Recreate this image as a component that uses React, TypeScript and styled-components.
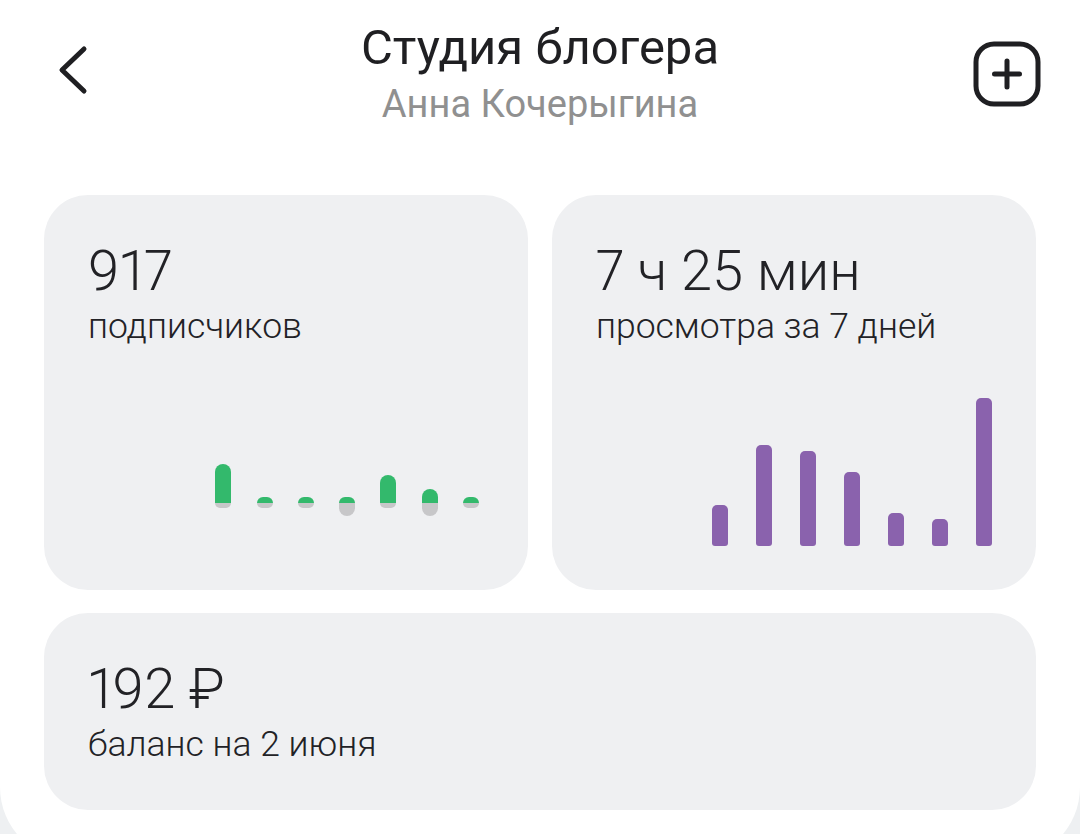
import React from "react";
import styled, { createGlobalStyle } from "styled-components";

const GlobalStyle = createGlobalStyle`
  html, body {
    margin: 0;
    padding: 0;
    background: #eef0f2;
    overflow: hidden;
  }
  body {
    font-family: Roboto, "Noto Sans", "Liberation Sans", sans-serif;
    color: #222226;
  }
  * { box-sizing: border-box; }
`;

const Sheet = styled.div`
  width: 1080px;
  min-height: 861px;
  background: #ffffff;
  border-radius: 0 0 74px 74px;
  padding-bottom: 51px;
`;

const Header = styled.header`
  display: grid;
  grid-template-columns: 1fr auto 1fr;
  align-items: start;
  padding: 20px 38px 0 38px;
`;

const IconButton = styled.button<{ $top: number; $side: "start" | "end"; $inset?: number }>`
  display: flex;
  border: none;
  background: none;
  padding: 0;
  margin-top: ${(p) => p.$top}px;
  margin-left: ${(p) => (p.$side === "start" ? p.$inset ?? 0 : 0)}px;
  justify-self: ${(p) => p.$side};
  color: #1f1f22;
  cursor: pointer;
`;

const TitleBlock = styled.div`
  display: flex;
  flex-direction: column;
  align-items: center;
`;

const Title = styled.h1`
  margin: 0;
  font-size: 49px;
  line-height: 56px;
  font-weight: 400;
  color: #1f1f22;
`;

const Subtitle = styled.div`
  margin-top: 6px;
  font-size: 38px;
  line-height: 44px;
  color: #909090;
`;

const Grid = styled.main`
  display: grid;
  grid-template-columns: 1fr 1fr;
  grid-template-rows: 395px 197px;
  column-gap: 24px;
  row-gap: 23px;
  margin-top: 69px;
  padding: 0 44px;
`;

const Card = styled.section<{ $wide?: boolean }>`
  display: flex;
  flex-direction: column;
  grid-column: ${(p) => (p.$wide ? "1 / span 2" : "auto")};
  background: #eff0f2;
  border-radius: 44px;
  padding: 44px 44px 44px 44px;
`;

const Value = styled.div`
  font-size: 56px;
  line-height: 64px;
  font-weight: 300;
  font-variant-numeric: proportional-nums;
  color: #222226;
`;

const Caption = styled.div`
  margin-top: 3px;
  font-size: 35.5px;
  line-height: 41px;
  font-weight: 300;
  color: #222226;
`;

const ChartArea = styled.div<{ $right: number; $bottom: number }>`
  flex: 1;
  display: flex;
  align-items: flex-end;
  justify-content: flex-end;
  padding-right: ${(p) => p.$right}px;
  padding-bottom: ${(p) => p.$bottom}px;
`;

const BarRow = styled.div<{ $gap: number }>`
  display: flex;
  align-items: flex-end;
  gap: ${(p) => p.$gap}px;
`;

const SplitColumn = styled.div`
  display: flex;
  flex-direction: column;
  width: 16px;
`;

const UpSlot = styled.div`
  height: 40px;
  display: flex;
  flex-direction: column;
  justify-content: flex-end;
`;

const DownSlot = styled.div`
  height: 13px;
  display: flex;
  flex-direction: column;
  justify-content: flex-start;
`;

const GainBar = styled.div`
  width: 16px;
  background: #33b96c;
  border-radius: 8px 8px 0 0;
`;

const LossBar = styled.div`
  width: 16px;
  background: #c7c7c9;
  border-radius: 0 0 8px 8px;
`;

const ViewBar = styled.div`
  width: 16px;
  background: #8a62ad;
  border-radius: 5px 5px 3px 3px;
`;

const subscribers = [
  { up: 39, down: 5 },
  { up: 6, down: 5 },
  { up: 6, down: 5 },
  { up: 6, down: 13 },
  { up: 28, down: 5 },
  { up: 14, down: 13 },
  { up: 6, down: 5 },
];

const views = [41, 101, 95, 74, 33, 27, 148];

const BackIcon = () => (
  <svg width="32" height="52" viewBox="0 0 32 52" fill="none">
    <path
      d="M26 5 L4 26 L26 47"
      stroke="currentColor"
      strokeWidth="5"
      strokeLinecap="round"
      strokeLinejoin="round"
    />
  </svg>
);

const AddIcon = () => (
  <svg width="70" height="70" viewBox="0 0 70 70" fill="none">
    <rect
      x="4"
      y="4"
      width="62"
      height="60"
      rx="18"
      stroke="currentColor"
      strokeWidth="5"
    />
    <path
      d="M22.5 34 H47.5 M35 21 V47"
      stroke="currentColor"
      strokeWidth="5"
      strokeLinecap="round"
    />
  </svg>
);

export default function App() {
  return (
    <>
      <GlobalStyle />
      <Sheet>
        <Header>
          <IconButton $top={24} $side="start" $inset={20} aria-label="Назад">
            <BackIcon />
          </IconButton>
          <TitleBlock>
            <Title>Студия блогера</Title>
            <Subtitle>Анна Кочерыгина</Subtitle>
          </TitleBlock>
          <IconButton $top={20} $side="end" aria-label="Создать">
            <AddIcon />
          </IconButton>
        </Header>
        <Grid>
          <Card>
            <Value>917</Value>
            <Caption>подписчиков</Caption>
            <ChartArea $right={5} $bottom={30}>
              <BarRow $gap={25.3}>
                {subscribers.map((s, i) => (
                  <SplitColumn key={i}>
                    <UpSlot>
                      <GainBar style={{ height: s.up }} />
                    </UpSlot>
                    <DownSlot>
                      <LossBar style={{ height: s.down }} />
                    </DownSlot>
                  </SplitColumn>
                ))}
              </BarRow>
            </ChartArea>
          </Card>
          <Card>
            <Value>7 ч 25 мин</Value>
            <Caption>просмотра за 7 дней</Caption>
            <ChartArea $right={0} $bottom={0}>
              <BarRow $gap={28}>
                {views.map((v, i) => (
                  <ViewBar key={i} style={{ height: v }} />
                ))}
              </BarRow>
            </ChartArea>
          </Card>
          <Card $wide>
            <Value>192 ₽</Value>
            <Caption>баланс на 2 июня</Caption>
          </Card>
        </Grid>
      </Sheet>
    </>
  );
}
